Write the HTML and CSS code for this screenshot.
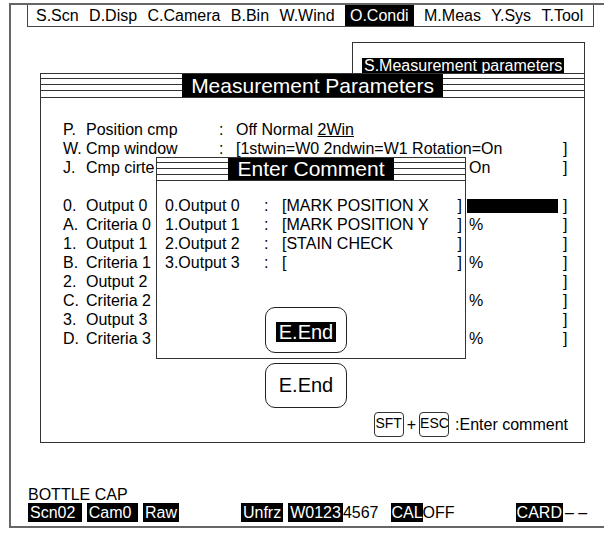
FILE: index.html
```html
<!DOCTYPE html>
<html lang="en">
<head>
    <meta charset="UTF-8">
    <title>Measurement Parameters</title>
    <link rel="stylesheet" href="styles.css">
</head>
<body>
<div class="screen">
    <!-- Top menu -->
    <nav class="menu">
        <span class="menu-item">S.Scn</span>
        <span class="menu-item">D.Disp</span>
        <span class="menu-item">C.Camera</span>
        <span class="menu-item">B.Bin</span>
        <span class="menu-item">W.Wind</span>
        <span class="menu-item active">O.Condi</span>
        <span class="menu-item">M.Meas</span>
        <span class="menu-item">Y.Sys</span>
        <span class="menu-item">T.Tool</span>
    </nav>

    <div class="desk">
        <!-- Sub menu window behind the main one -->
        <div class="subwin">
            <span class="subwin-label">S.Measurement parameters</span>
        </div>

        <section class="window main">
            <header class="titlebar">
                <span class="rule"></span>
                <h1 class="title">Measurement Parameters</h1>
                <span class="rule"></span>
            </header>

            <!-- values under the dialog are left empty, only the visible tail is shown -->
            <div class="params">
                <span>P.</span><span>Position cmp</span><span>:</span>
                <span class="span-3">Off Normal <u>2Win</u></span>

                <span>W.</span><span>Cmp window</span><span>:</span>
                <span class="span-2">[1stwin=W0 2ndwin=W1 Rotation=On</span><span>]</span>

                <span>J.</span><span>Cmp cirte</span><span></span>
                <span></span><span class="extra">On</span><span>]</span>

                <div class="blank"></div>

                <span>0.</span><span>Output 0</span><span></span>
                <span></span><span><i class="bar"></i></span><span>]</span>

                <span>A.</span><span>Criteria 0</span><span></span>
                <span></span><span class="extra">%</span><span>]</span>

                <span>1.</span><span>Output 1</span><span></span>
                <span></span><span></span><span>]</span>

                <span>B.</span><span>Criteria 1</span><span></span>
                <span></span><span class="extra">%</span><span>]</span>

                <span>2.</span><span>Output 2</span><span></span>
                <span></span><span></span><span>]</span>

                <span>C.</span><span>Criteria 2</span><span></span>
                <span></span><span class="extra">%</span><span>]</span>

                <span>3.</span><span>Output 3</span><span></span>
                <span></span><span></span><span>]</span>

                <span>D.</span><span>Criteria 3</span><span></span>
                <span></span><span class="extra">%</span><span>]</span>
            </div>

            <div class="end-row">
                <span class="end-btn">E.End</span>
            </div>

            <div class="help">
                <kbd class="key">SFT</kbd>
                <span class="plus">+</span>
                <kbd class="key">ESC</kbd>
                <span class="help-text">:Enter comment</span>
            </div>

            <!-- Comment dialog on top -->
            <section class="window dialog">
                <header class="titlebar">
                    <span class="rule"></span>
                    <h2 class="title">Enter Comment</h2>
                    <span class="rule"></span>
                </header>
                <div class="comments">
                    <span>0.Output 0</span><span>:</span><span>[MARK POSITION X</span><span>]</span>
                    <span>1.Output 1</span><span>:</span><span>[MARK POSITION Y</span><span>]</span>
                    <span>2.Output 2</span><span>:</span><span>[STAIN CHECK</span><span>]</span>
                    <span>3.Output 3</span><span>:</span><span>[</span><span>]</span>
                </div>
                <div class="dialog-end">
                    <span class="end-btn selected"><span class="end-label">E.End</span></span>
                </div>
            </section>
        </section>
    </div>

    <!-- Status line -->
    <footer class="status">
        <div class="status-name">BOTTLE CAP</div>
        <div class="status-bar">
            <span class="tag">Scn02&nbsp;</span>
            <span class="tag sp-s">Cam0&nbsp;</span>
            <span class="tag sp-s">Raw</span>
            <span class="tag sp-l">Unfrz</span>
            <span class="tag sp-s">W0123</span>
            <span>4567</span>
            <span class="tag tight sp-m">CAL</span>
            <span>OFF</span>
            <span class="tag card">CARD</span>
            <span class="sp-xs">– –</span>
        </div>
    </footer>
</div>
</body>
</html>
```

FILE: styles.css
```css
* {
    box-sizing: border-box;
}
body {
    margin: 0;
    width: 604px;
    height: 533px;
    overflow: hidden;
    background-color: #fff;
    font-family: "Liberation Sans", Arial, sans-serif;
    font-size: 16px;
    color: #000;
}
.screen {
    margin: 3px 0 0 9px;
    width: 620px;
    height: 525px;
    border: 2px solid #666;
    border-right: none;
    display: flex;
    flex-direction: column;
}

/* menu */
.menu {
    display: flex;
    width: 567px;
    height: 22px;
    margin-left: 16px;
    padding-left: 8px;
    gap: 10.4px;
    border: 1px solid #444;
    border-top: none;
    line-height: 21px;
}
.menu-item.active {
    background-color: #000;
    color: #fff;
    padding: 0 5px;
}

/* windows */
.desk {
    position: relative;
    padding: 46px 0 0 29px;
}
.subwin {
    position: absolute;
    left: 341px;
    top: 15px;
    width: 233px;
    height: 50px;
    border: 1px solid #333;
    padding: 14px 0 0 9px;
}
.subwin-label {
    display: inline-block;
    background-color: #000;
    color: #fff;
    padding: 0 2px;
    line-height: 16px;
}
.window {
    background-color: #fff;
    border: 1px solid #333;
}
.main {
    position: relative;
    width: 545px;
    height: 370px;
}
.titlebar {
    display: flex;
    height: 24px;
    border-bottom: 1px solid #333;
}
.rule {
    flex: 1;
    background: repeating-linear-gradient(to bottom, transparent 0 4px, #333 4px 5px, transparent 5px 6px) 0 0 / 100% 18px no-repeat;
}
.title {
    margin: 0;
    padding: 0 9px;
    background-color: #000;
    color: #fff;
    font-size: 21px;
    font-weight: normal;
    line-height: 23px;
}
.dialog .titlebar {
    height: 23px;
}
.dialog .title {
    line-height: 22px;
    padding: 0 9.5px;
}

/* parameter list */
.params {
    display: grid;
    grid-template-columns: 23px 133px 17px 231px 96px 1fr;
    padding: 22px 16px 0 22px;
    line-height: 19px;
    white-space: nowrap;
}
.span-2 {
    grid-column: span 2;
}
.span-3 {
    grid-column: span 3;
}
.extra {
    padding-left: 2px;
}
.blank {
    grid-column: 1 / -1;
    height: 19px;
}
.bar {
    display: inline-block;
    width: 91px;
    height: 14px;
    background-color: #000;
    vertical-align: -2px;
}

/* end buttons */
.end-row {
    margin: 15px 0 0 224px;
}
.end-btn {
    display: flex;
    align-items: center;
    justify-content: center;
    width: 82px;
    height: 45px;
    border: 1px solid #222;
    border-radius: 10px;
    font-size: 20px;
}
.end-btn.selected {
    height: 46px;
    padding-top: 4px;
}
.end-label {
    background-color: #000;
    color: #fff;
    padding: 0 3px;
    line-height: 20px;
}
.help {
    display: flex;
    justify-content: flex-end;
    align-items: center;
    height: 25px;
    margin-top: 4px;
    padding-right: 16px;
}
.key {
    width: 30px;
    height: 25px;
    border: 1px solid #333;
    border-radius: 4px;
    font-family: "Liberation Sans", Arial, sans-serif;
    font-size: 14px;
    line-height: 21px;
    text-align: center;
}
.plus {
    margin: 0 3px;
}
.help-text {
    margin-left: 6px;
}

/* comment dialog */
.dialog {
    position: absolute;
    left: 115px;
    top: 83px;
    width: 310px;
    height: 202px;
}
.comments {
    display: grid;
    grid-template-columns: 99px 18px 1fr auto;
    padding: 15px 3px 0 8px;
    line-height: 19px;
}
.dialog-end {
    margin: 35px 0 0 108px;
}

/* status line */
.status {
    margin-top: auto;
    padding: 0 0 4px 17px;
}
.status-name {
    line-height: 17px;
}
.status-bar {
    display: flex;
    line-height: 19px;
    white-space: pre;
}
.tag {
    background-color: #000;
    color: #fff;
    padding: 0 2px;
}
.tag.tight {
    padding: 0;
}
.tag.card {
    margin-left: 61px;
    padding: 0 1px;
}
.sp-xs {
    margin-left: 2px;
}
.sp-s {
    margin-left: 5px;
}
.sp-m {
    margin-left: 13px;
}
.sp-l {
    margin-left: 62px;
}
```
